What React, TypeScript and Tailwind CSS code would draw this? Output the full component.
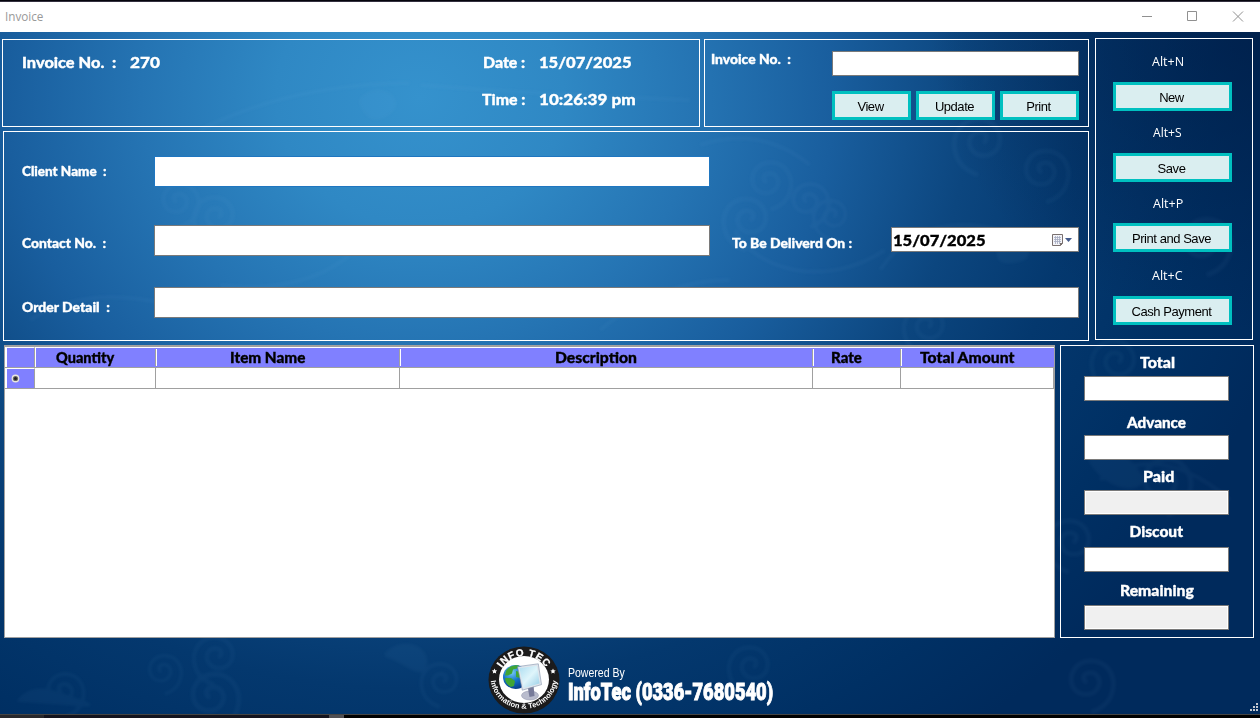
import { useLayoutEffect, useRef } from "react";
import type { ReactNode } from "react";

type FitProps = { text: string; width: number; className?: string };

/* Stretches or condenses one line of text to a fixed width. */
function Fit({ text, width, className = "" }: FitProps) {
  const ref = useRef<HTMLSpanElement>(null);
  useLayoutEffect(() => {
    const el = ref.current;
    if (!el) return;
    el.style.transform = `scaleX(${width / el.offsetWidth})`;
  }, [text, width]);
  return (
    <span className={`block shrink-0 ${className}`} style={{ width }}>
      <span ref={ref} className="inline-block origin-left whitespace-pre">
        {text}
      </span>
    </span>
  );
}

const heavy = "font-['Lato','Liberation_Sans',sans-serif] font-black [-webkit-text-stroke:0.35px_currentColor]";
const big = `${heavy} text-[15.5px] leading-[20px] text-white`;
const small = `${heavy} text-[13px] leading-[17px] text-white`;

function Button({ children, className = "" }: { children: ReactNode; className?: string }) {
  return (
    <button
      className={`h-[29px] shrink-0 border-[3px] border-[#00c0c0] bg-[#daeef0] pt-[2px] pr-[2px] text-center font-['Liberation_Sans',Arial,sans-serif] text-[13px] leading-[21px] tracking-[-0.45px] text-black ${className}`}
    >
      {children}
    </button>
  );
}

const spirals = [
  { x: 160, y: 670, s: 0.9 }, { x: 220, y: 655, s: 1.1 }, { x: 208, y: 695, s: 1.3 }, { x: 445, y: 680, s: 1 },
  { x: 765, y: 180, s: 1.1 }, { x: 752, y: 218, s: 1.2 }, { x: 805, y: 200, s: 1 }, { x: 985, y: 140, s: 1.3 },
  { x: 1040, y: 170, s: 1.2 }, { x: 220, y: 215, s: 1.1 }, { x: 175, y: 200, s: 1 }, { x: 835, y: 215, s: 0.9 },
  { x: 1085, y: 680, s: 1.2 }, { x: 755, y: 665, s: 1.1 }, { x: 1160, y: 480, s: 1.3 }, { x: 1075, y: 540, s: 1.2 },
  { x: 1200, y: 240, s: 1.3 }, { x: 1120, y: 360, s: 1.2 }, { x: 60, y: 690, s: 1 }, { x: 930, y: 325, s: 1.1 },
];

function Ornament() {
  return (
    <svg className="pointer-events-none absolute inset-0 h-full w-full" viewBox="0 32 1260 682" preserveAspectRatio="none" fill="none" stroke="#8fc4ee">
      <defs>
        <filter id="soft"><feGaussianBlur stdDeviation="1.8" /></filter>
      </defs>
      <g filter="url(#soft)" opacity="0.045" strokeWidth="4">
        {spirals.map((p, i) => (
          <path
            key={i}
            transform={`translate(${p.x} ${p.y}) scale(${i % 2 ? -p.s : p.s} ${p.s})`}
            d="M2 2c-4-1-5-7 1-8 7-1 11 6 8 12-4 8-16 8-21 0-5-11 3-22 15-22 14 0 21 13 18 25-2 9-9 15-18 18"
          />
        ))}
        <path d="M200 130q90-46 210-47M420 85q130 10 270 15M700 145q60-20 110 20M735 230c20 40 90 60 150 20M880 270q40-60 120-40M220 285q80 10 130-30M30 320q60-40 160-10M600 330q60-50 130-50M1100 480q60-40 130 20" />
        <path fill="#8fc4ee" d="M385 655c20-20 45-5 40 10s-20-5-40-10M1090 460c20-20 40 0 50 15s-30 20-50-15M360 100c20-20 45 0 30 12s-25 5-30-12M1000 240c15-15 40 15 20 20s-25 0-20-20M20 700c15-20 40-5 70 5z" />
      </g>
    </svg>
  );
}

function Logo() {
  return (
    <svg className="h-[68px] w-[72px] shrink-0" viewBox="0 0 72 68">
      <defs>
        <path id="arcTop" d="M10 35A26 25 0 0 1 62 35" />
        <path id="arcBottom" d="M2.500 31A33.500 31.800 0 0 0 69.500 31" />
        <radialGradient id="sea" cx="35%" cy="30%" r="75%">
          <stop offset="0" stopColor="#79cdf8" />
          <stop offset="0.5" stopColor="#1473c8" />
          <stop offset="1" stopColor="#063b88" />
        </radialGradient>
        <linearGradient id="glass" x1="0" y1="0" x2="1" y2="1">
          <stop offset="0" stopColor="#a9dbf0" />
          <stop offset="0.5" stopColor="#dff5fb" />
          <stop offset="1" stopColor="#8ec9e4" />
        </linearGradient>
      </defs>
      <ellipse cx="36" cy="34" rx="35.5" ry="33.5" fill="#1c1b1b" />
      <ellipse cx="36" cy="33.5" rx="25" ry="23.5" fill="#fff" />
      <text fill="#fff" stroke="#fff" strokeWidth=".3" fontFamily="Liberation Sans" fontWeight="700" fontSize="10" letterSpacing=".7" textAnchor="middle">
        <textPath href="#arcTop" startOffset="50%">INFO TEC</textPath>
      </text>
      <text fill="#fff" fontFamily="Liberation Sans" fontWeight="700" fontSize="7.500" letterSpacing=".1" textAnchor="middle">
        <textPath href="#arcBottom" startOffset="50%">Information &amp; Technology</textPath>
      </text>
      <path fill="#fff" d="M6.500 22.500l.8 1.700 1.900.2-1.400 1.300.4 1.900-1.700-.9-1.700.9.400-1.900-1.400-1.300 1.900-.2zM65 22.500l.8 1.700 1.900.2-1.400 1.300.4 1.900-1.700-.9-1.700.9.400-1.900-1.400-1.300 1.900-.2z" />
      <ellipse cx="27.500" cy="31" rx="12.500" ry="12" fill="url(#sea)" />
      <path fill="#3fa535" d="M18 25c3-5 9-6.500 13-5.500l-2 3-4 1-1 4-4 2-3 0zM17 32l6 0 4 3-1 5-3 1c-4-2-6-5-6-9zM28 25l4 1v6l-4-1z" />
      <ellipse cx="42" cy="49.500" rx="8.500" ry="4.500" fill="#b9bccd" stroke="#8f92a8" strokeWidth=".5" />
      <path fill="#777b9a" d="M39.500 40l6-1 1 11-5 1z" />
      <path fill="url(#glass)" stroke="#dfe5ec" strokeWidth="1.600" d="M30.500 21.500l19-2.500 3 19-17.500 5z" />
      <path fill="none" stroke="#7d8fa8" strokeWidth=".6" d="M29.600 20.600l20.700-2.800 3.200 20.800-19.200 5.600z" />
    </svg>
  );
}

const box = "shrink-0 rounded-none border border-[#7a7a7a] bg-white outline-none";

const shortcuts = [
  { key: "Alt+N", label: "New", w: 32, top: "h-[43px] pb-[11px] pl-[39px]" },
  { key: "Alt+S", label: "Save", w: 29, top: "h-[42px] pb-[11px] pl-[40px]" },
  { key: "Alt+P", label: "Print and Save", w: 30, top: "h-[41px] pb-[10px] pl-[40px]" },
  { key: "Alt+C", label: "Cash Payment", w: 31, top: "h-[44px] pb-[11px] pl-[39px]" },
];

const totals = [
  { label: "Total", w: 35, h: "h-[30px] pb-[4px] pl-px", ro: false },
  { label: "Advance", w: 59, h: "h-[34px] pb-[3px]", ro: false },
  { label: "Paid", w: 31, h: "h-[30px] pb-[4px] pl-[4px]", ro: true },
  { label: "Discout", w: 54, h: "h-[32px] pb-[6px]", ro: false },
  { label: "Remaining", w: 74, h: "h-[33px] pb-[5px]", ro: true },
];

const columns = [
  { label: "Quantity", w: 58, cls: "w-[121px] pl-[20px]" },
  { label: "Item Name", w: 75, cls: "w-[244px] pl-[73px]" },
  { label: "Description", w: 82, cls: "w-[413px] pl-[154px]" },
  { label: "Rate", w: 31, cls: "w-[88px] pl-[17px]" },
  { label: "Total Amount", w: 94, cls: "w-[152px] pl-[18px]" },
];

function ItemsGrid() {
  return (
    <div className="h-[293px] w-[1051px] border border-[#a0a0a0] bg-white">
      <div className="flex h-[22px] border-t border-r border-b border-[#a0a0a0] pl-px">
        <div className="w-[29px] shrink-0 border-t border-r border-l border-t-white border-r-[#a0a0a0] border-l-white bg-[#8080ff]" />
        <div className="flex flex-1 border-t border-l border-white bg-[#8080ff]">
          {columns.map((c, i) => (
            <div key={c.label} className={`relative shrink-0 ${c.cls}`}>
              <Fit text={c.label} width={c.w} className={`${heavy} text-[15.5px] leading-[18px] text-black`} />
              {i < 4 && <i className="absolute top-px right-0 h-[17px] w-[2px] border-r border-l border-r-white border-l-[#a0a0a0]" />}
            </div>
          ))}
        </div>
      </div>
      <div className="flex h-[21px] border-r border-b border-[#a0a0a0] pl-px">
        <div className="flex w-[29px] shrink-0 items-center border-t border-r border-l border-t-white border-r-[#a0a0a0] border-l-white bg-[#8080ff] pl-[4px]">
          <svg className="h-[9px] w-[9px]" viewBox="0 0 9 9">
            <circle cx="4.500" cy="4.500" r="3.900" fill="#e9e7dc" />
            <circle cx="4.500" cy="4.500" r="2.600" fill="#666" />
            <circle cx="4.500" cy="4.500" r="1.500" fill="#222" />
          </svg>
        </div>
        <div className="w-[121px] border-r border-[#a0a0a0]" />
        <div className="w-[244px] border-r border-[#a0a0a0]" />
        <div className="w-[413px] border-r border-[#a0a0a0]" />
        <div className="w-[88px] border-r border-[#a0a0a0]" />
      </div>
    </div>
  );
}

export default function App() {
  return (
    <div className="flex h-[718px] w-[1260px] flex-col overflow-hidden bg-black">
      <div className="h-[2px] shrink-0 border-b border-[#33303f] bg-[#05040c]" />
      <header className="flex h-[30px] shrink-0 items-center justify-between bg-white pr-[16px] pl-[5px]">
        <Fit text="Invoice" width={38} className="font-['Open_Sans','Noto_Sans',sans-serif] text-[12px] leading-[16px] text-[#999]" />
        <svg className="h-[12px] w-[104px]" viewBox="0 0 104 12" fill="none" stroke="#909090">
          <path d="M2 5.500h10M47.500 .5h9v9h-9zM93 .5l10 10M103 .5l-10 10" />
        </svg>
      </header>

      <main className="relative h-[682px] shrink-0 bg-[radial-gradient(ellipse_900px_800px_at_420px_65px,#3592cd_0%,#2f88c4_16%,#2574b3_31%,#195e9e_46%,#0c467f_61%,#04386e_74%,#003064_88%,#002a5c_100%)]">
        <div className="absolute inset-0 bg-[radial-gradient(ellipse_330px_300px_at_1260px_0px,#001c45b3,#001c4500)]" />
        <Ornament />
        <div className="relative flex flex-col">
          <div className="flex h-[313px]">
            <div className="flex w-[1095px] shrink-0 flex-col pt-[7px]">
              <div className="flex gap-[4px] pl-[2px]">
                <section className="flex h-[88px] w-[698px] border border-white pt-[12px] pl-[19px]">
                  <Fit text="Invoice No.  :" width={94} className={big} />
                  <Fit text="270" width={30} className={`${big} ml-[14px]`} />
                  <div className="ml-[322px] flex flex-col gap-[17px]">
                    <div className="flex pl-px">
                      <Fit text="Date :" width={42} className={big} />
                      <Fit text="15/07/2025" width={93} className={`${big} ml-[14px]`} />
                    </div>
                    <div className="flex">
                      <Fit text="Time :" width={43} className={big} />
                      <Fit text="10:26:39 pm" width={97} className={`${big} ml-[14px]`} />
                    </div>
                  </div>
                </section>
                <section className="h-[88px] w-[385px] border border-white pt-[11px] pr-[9px] pl-[6px]">
                  <div className="flex justify-between">
                    <Fit text="Invoice No.  :" width={80} className={small} />
                    <input className={`${box} h-[25px] w-[247px]`} />
                  </div>
                  <div className="mt-[15px] flex justify-end gap-[5px]">
                    <Button className="w-[79px]">View</Button>
                    <Button className="w-[79px]">Update</Button>
                    <Button className="w-[79px]">Print</Button>
                  </div>
                </section>
              </div>

              <section className="mt-[4px] ml-[3px] h-[210px] w-[1086px] border border-white pt-[24px] pl-[18px]">
                <div className="flex h-[69px]">
                  <Fit text="Client Name  :" width={85} className={`${small} mt-[7px]`} />
                  <input className="ml-[47px] h-[31px] w-[556px] border border-[#1f76c0] bg-white outline-none" />
                </div>
                <div className="flex h-[62px]">
                  <Fit text="Contact No.  :" width={84} className={`${small} mt-[10px]`} />
                  <input className={`${box} ml-[48px] h-[31px] w-[556px]`} />
                  <Fit text="To Be Deliverd On :" width={120} className={`${small} mt-[10px] ml-[22px]`} />
                  <div className="mt-[2px] ml-[39px] flex h-[25px] w-[188px] items-center border border-[#7a7a7a] bg-white pl-px">
                    <Fit text="15/07/2025" width={93} className={`${heavy} text-[15.5px] leading-[20px] text-black`} />
                    <svg className="ml-[65px] h-[14px] w-[24px]" viewBox="0 0 24 14">
                      <path fill="#f4f4f8" stroke="#79706f" d="M1.500 1.500h10v9l-2 2h-8z" />
                      <path stroke="#a5abc0" strokeWidth=".8" d="M3 4.500h7M3 6.500h7M3 8.500h7M4.500 3v8M6.500 3v8M8.500 3v8" />
                      <path fill="#79706f" d="M9 13V10h3z" />
                      <path fill="#435a8c" d="M14 5h7l-3.500 4z" />
                    </svg>
                  </div>
                </div>
                <div className="flex">
                  <Fit text="Order Detail  :" width={88} className={`${small} mt-[12px]`} />
                  <input className={`${box} ml-[44px] h-[31px] w-[925px]`} />
                </div>
              </section>
            </div>

            <section className="mt-[6px] h-[302px] w-[158px] border border-white pl-[17px]">
              {shortcuts.map((s) => (
                <div key={s.key}>
                  <div className={`flex items-end ${s.top}`}>
                    <Fit text={s.key} width={s.w} className="font-['Open_Sans','Noto_Sans',sans-serif] text-[12.5px] leading-[18px] text-white" />
                  </div>
                  <Button className="block w-[119px]">{s.label}</Button>
                </div>
              ))}
            </section>
          </div>

          <div className="flex pl-[4px]">
            <ItemsGrid />
            <section className="ml-[5px] flex h-[293px] w-[194px] flex-col items-center border border-white">
              {totals.map((t) => (
                <div key={t.label} className="flex flex-col items-center pr-px">
                  <div className={`flex items-end ${t.h}`}>
                    <Fit text={t.label} width={t.w} className={big} />
                  </div>
                  <input
                    readOnly={t.ro}
                    className={`h-[25px] w-[145px] border border-[#7a7a7a] outline-none ${t.ro ? "bg-[#f0f0f0] shadow-[inset_0_0_0_1px_#fff]" : "bg-white"}`}
                  />
                </div>
              ))}
            </section>
          </div>

          <footer className="flex h-[76px] pt-[8px] pl-[488px]">
            <Logo />
            <div className="pt-[19px] pl-[8px] text-white">
              <Fit text="Powered By" width={57} className="font-['Liberation_Sans',Arial,sans-serif] text-[12px] leading-[16px]" />
              <Fit text="InfoTec (0336-7680540)" width={205} className="font-['Roboto','Liberation_Sans',sans-serif] text-[23px] leading-[24px] font-black [-webkit-text-stroke:0.9px_white]" />
            </div>
          </footer>
        </div>
        <svg className="absolute right-px bottom-[2px] h-[9px] w-[9px]" viewBox="0 0 9 9" fill="#c4c8d0">
          <path d="M0 6h2v2H0zM3 6h2v2H3zM6 6h2v2H6zM3 3h2v2H3zM6 3h2v2H6zM6 0h2v2H6z" />
        </svg>
      </main>
      <div className="flex h-[4px] shrink-0 border-t border-[#444]">
        <div className="w-[44px] bg-[#28282c]" />
        <div className="w-[285px] bg-[#14141e]" />
        <div className="w-[15px] bg-[#505054]" />
      </div>
    </div>
  );
}
